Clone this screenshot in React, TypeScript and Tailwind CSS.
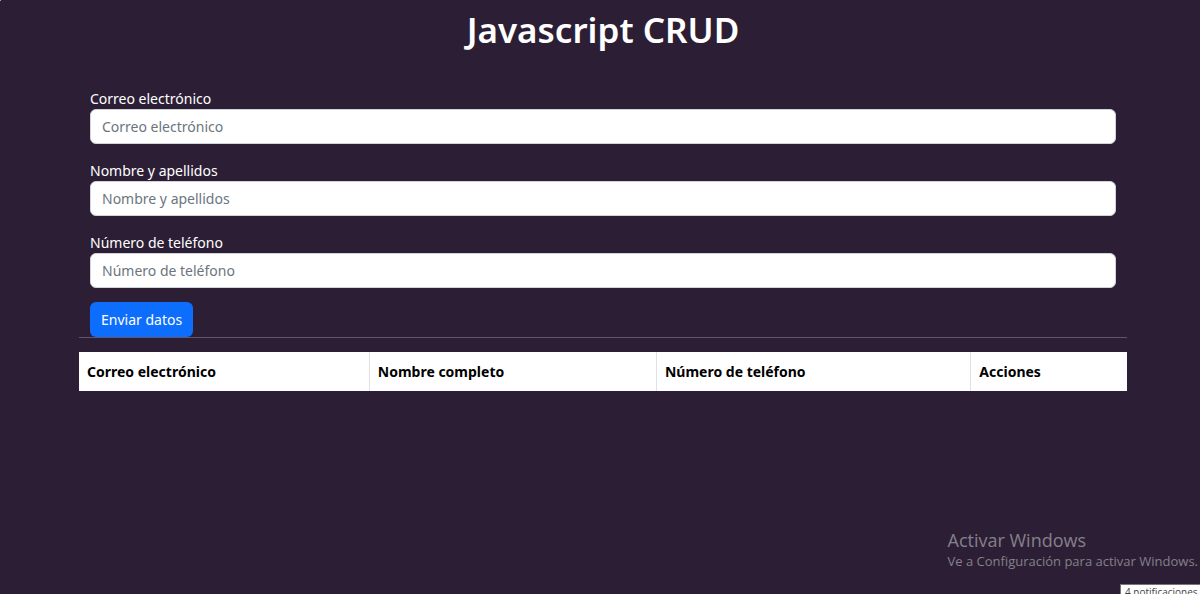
import { useState, type FormEvent } from "react";

type FieldName = "email" | "name" | "phone";
type Contact = Record<FieldName, string>;

const fields: { name: FieldName; label: string; type: string }[] = [
  { name: "email", label: "Correo electrónico", type: "email" },
  { name: "name", label: "Nombre y apellidos", type: "text" },
  { name: "phone", label: "Número de teléfono", type: "tel" },
];

const columns = [
  { title: "Correo electrónico", width: "w-[27.7%]" },
  { title: "Nombre completo", width: "w-[27.4%]" },
  { title: "Número de teléfono", width: "w-[30%]" },
  { title: "Acciones", width: "w-[14.9%]" },
];

const emptyContact: Contact = { email: "", name: "", phone: "" };

export default function App() {
  const [draft, setDraft] = useState<Contact>(emptyContact);
  const [contacts, setContacts] = useState<Contact[]>([]);

  const submit = (event: FormEvent) => {
    event.preventDefault();
    setContacts([...contacts, draft]);
    setDraft(emptyContact);
  };

  return (
    <div className="relative min-h-screen overflow-hidden bg-[#2c1f35] pl-1.5 font-['Noto_Sans',sans-serif] text-sm text-white">
      <span className="absolute top-0 left-0 size-px bg-[#a9a4ad]" />
      <h1 className="pt-2 text-center text-[35px] leading-11 font-semibold">Javascript CRUD</h1>

      <main className="mx-auto w-[88%] max-w-[1048px] pt-9">
        <form onSubmit={submit} className="px-[11px]">
          <div className="flex flex-col gap-4">
            {fields.map((field) => (
              <div key={field.name}>
                <label htmlFor={field.name} className="block h-[21px] leading-[22px]">
                  {field.label}
                </label>
                <input
                  id={field.name}
                  type={field.type}
                  placeholder={field.label}
                  value={draft[field.name]}
                  onChange={(event) => setDraft({ ...draft, [field.name]: event.target.value })}
                  className="block h-[35px] w-full rounded-md border border-[#ced4da] bg-white px-[11px] text-[#212529] placeholder:text-[#6c757d]"
                />
              </div>
            ))}
          </div>
          <button
            type="submit"
            className="mt-3.5 block h-[35px] rounded-md bg-[#0d6efd] px-[11px] text-white"
          >
            Enviar datos
          </button>
        </form>

        <hr className="mb-3.5 border-t border-[#61576a]" />

        <table className="w-full table-fixed border-collapse bg-white text-black">
          <thead>
            <tr>
              {columns.map((column) => (
                <th
                  key={column.title}
                  scope="col"
                  className={`h-[39px] border-l border-[#dee2e6] px-2 text-left font-bold first:border-l-0 ${column.width}`}
                >
                  {column.title}
                </th>
              ))}
            </tr>
          </thead>
          <tbody>
            {contacts.map((contact, index) => (
              <tr key={index} className="border-t border-[#dee2e6]">
                <td className="p-2">{contact.email}</td>
                <td className="p-2">{contact.name}</td>
                <td className="p-2">{contact.phone}</td>
                <td className="p-2">
                  <button
                    type="button"
                    onClick={() => setContacts(contacts.filter((_, i) => i !== index))}
                    className="rounded-md bg-[#dc3545] px-3 py-1 text-white"
                  >
                    Eliminar
                  </button>
                </td>
              </tr>
            ))}
          </tbody>
        </table>
      </main>

      <aside className="pointer-events-none absolute right-0.5 bottom-6 font-['Open_Sans',sans-serif] whitespace-nowrap text-[#85808b]">
        <p className="text-lg leading-6">Activar Windows</p>
        <p className="text-[13px] leading-[18px]">Ve a Configuración para activar Windows.</p>
      </aside>

      <div
        role="status"
        className="absolute -right-2 -bottom-2 h-[18px] w-[88px] border border-[#767676] bg-white px-1 font-['Open_Sans',sans-serif] text-[10px] leading-[14px] whitespace-nowrap text-[#444444]"
      >
        4 notificaciones
      </div>
    </div>
  );
}
